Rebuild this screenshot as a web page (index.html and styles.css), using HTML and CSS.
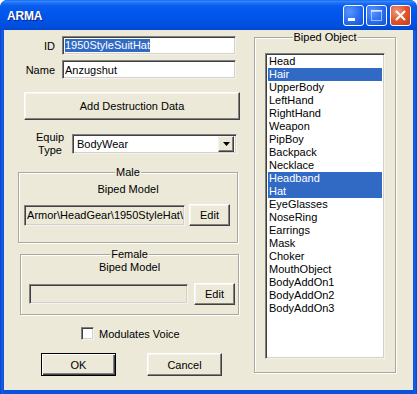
FILE: index.html
```html
<!DOCTYPE html>
<html>
<head>
<meta charset="utf-8">
<link rel="stylesheet" href="styles.css">
</head>
<body>
<div class="window">
  <div class="titlebar">
    <span class="title">ARMA</span>
    <div class="tb-buttons">
      <div class="tb-btn tb-min"><svg width="21" height="21" viewBox="0 0 21 21"><rect x="5" y="13" width="7" height="3" fill="#fff"/></svg></div>
      <div class="tb-btn tb-max"><svg width="21" height="21" viewBox="0 0 21 21"><rect x="5.5" y="5.5" width="10" height="10" fill="none" stroke="#fff" stroke-width="1" opacity="0.55"/><rect x="5" y="5" width="11" height="2" fill="#fff" opacity="0.55"/></svg></div>
      <div class="tb-btn tb-close"><svg width="21" height="21" viewBox="0 0 21 21"><path d="M6 6 L15 15 M15 6 L6 15" stroke="#fff" stroke-width="2"/></svg></div>
    </div>
  </div>
  <div class="client">
    <div class="left">
      <div class="row row-id">
        <label class="lbl">ID</label>
        <div class="edit edit-id"><span class="sel">1950StyleSuitHat</span></div>
      </div>
      <div class="row row-name">
        <label class="lbl">Name</label>
        <div class="edit edit-id">Anzugshut</div>
      </div>
      <div class="btn btn-destr">Add Destruction Data</div>
      <div class="row row-equip">
        <div class="lbl-equip">Equip<br>Type</div>
        <div class="combo">
          <span class="combo-text">BodyWear</span>
          <div class="combo-btn"><svg width="7" height="4" viewBox="0 0 7 4"><path d="M0 0 H7 L3.5 4 Z" fill="#000"/></svg></div>
        </div>
      </div>
      <div class="group group-male">
        <span class="gtitle">Male</span>
        <div class="gsub">Biped Model</div>
        <div class="grow">
          <div class="edit path path-male"><span>Armor\HeadGear\1950StyleHat\</span></div>
          <div class="btn btn-edit">Edit</div>
        </div>
      </div>
      <div class="group group-female">
        <span class="gtitle">Female</span>
        <div class="gsub">Biped Model</div>
        <div class="grow grow-f">
          <div class="edit path path-female"></div>
          <div class="btn btn-edit">Edit</div>
        </div>
      </div>
      <div class="check-row">
        <div class="checkbox"></div>
        <span>Modulates Voice</span>
      </div>
      <div class="btn-row">
        <div class="btn btn-ok">OK</div>
        <div class="btn btn-cancel">Cancel</div>
      </div>
    </div>
    <div class="right">
      <div class="group group-biped">
        <span class="gtitle">Biped Object</span>
        <div class="listbox">
          <div class="item">Head</div>
          <div class="item selected">Hair</div>
          <div class="item">UpperBody</div>
          <div class="item">LeftHand</div>
          <div class="item">RightHand</div>
          <div class="item">Weapon</div>
          <div class="item">PipBoy</div>
          <div class="item">Backpack</div>
          <div class="item">Necklace</div>
          <div class="item selected">Headband</div>
          <div class="item selected">Hat</div>
          <div class="item">EyeGlasses</div>
          <div class="item">NoseRing</div>
          <div class="item">Earrings</div>
          <div class="item">Mask</div>
          <div class="item">Choker</div>
          <div class="item">MouthObject</div>
          <div class="item">BodyAddOn1</div>
          <div class="item">BodyAddOn2</div>
          <div class="item">BodyAddOn3</div>
        </div>
      </div>
    </div>
  </div>
</div>
</body>
</html>
```

FILE: styles.css
```css
* { box-sizing: border-box; }
html, body { margin: 0; padding: 0; background: #fff; }
body { font-family: "Liberation Sans", Arial, sans-serif; font-size: 11px; color: #000; }

.window {
  width: 417px;
  height: 394px;
  display: flex;
  flex-direction: column;
  background: linear-gradient(to right, #0842C8 0px, #1660E6 2px, #0A52DC 4px, #0A52DC 413px, #1660E6 415px, #0842C8 417px);
  border-radius: 7px 7px 0 0;
  padding: 0 4px 4px 4px;
  overflow: hidden;
}

.titlebar {
  height: 30px;
  margin: 0 -4px;
  padding: 0 6px 0 7px;
  display: flex;
  align-items: center;
  justify-content: space-between;
  border-radius: 7px 7px 0 0;
  background: linear-gradient(to bottom, #0A5AE8 0px, #3B8CFF 1px, #1C70F8 3px, #0A5CEC 6px, #0058EE 12px, #0053E6 20px, #0050DE 26px, #0047CF 30px);
}
.title {
  color: #fff;
  font-weight: bold;
  font-size: 12px;
  letter-spacing: -0.2px;
  text-shadow: 1px 1px 0 #0A1E82;
  margin-top: 1px;
}
.tb-buttons { display: flex; gap: 1px; margin-top: 0px; }
.tb-btn {
  width: 21px;
  height: 21px;
  border: 1px solid #fff;
  border-radius: 3px;
  display: flex;
  align-items: center;
  justify-content: center;
  margin-left: 1px;
}
.tb-btn svg { display: block; margin: -1px; }
.tb-min, .tb-max {
  background: radial-gradient(circle at 30% 30%, #5A96FF 0%, #2C6FF2 50%, #1150D8 100%);
}
.tb-max { opacity: 1; }
.tb-close {
  margin-left: 2px;
  background: radial-gradient(circle at 30% 30%, #F09A80 0%, #E1542C 50%, #C4391B 100%);
}

.client {
  flex: 1;
  background: #ECE9D8;
  display: flex;
}

.left { width: 240px; display: flex; flex-direction: column; }
.right { flex: 1; }

.row { display: flex; align-items: center; }
.row-id { margin-top: 6px; height: 19px; }
.row-name { margin-top: 5px; height: 19px; }
.lbl { width: 51px; text-align: right; margin-right: 7px; }

.edit {
  background: #fff;
  border: 1px solid;
  border-color: #808080 #F4F3EE #F4F3EE #808080;
  box-shadow: inset 1px 1px 0 #404040, inset -1px -1px 0 #D4D0C8;
  padding: 0 2px;
  white-space: nowrap;
  overflow: hidden;
  display: flex;
  align-items: center;
}
.edit-id { width: 174px; height: 19px; }
.sel { background: #316AC5; color: #fff; line-height: 13px; }

.btn {
  background: #ECE9D8;
  border: 1px solid;
  border-color: #FFFFFF #404040 #404040 #FFFFFF;
  box-shadow: inset -1px -1px 0 #808080, inset 1px 1px 0 #F6F5EF;
  display: flex;
  align-items: center;
  justify-content: center;
}
.btn-destr { margin: 13px 0 0 20px; width: 216px; height: 28px; }

.row-equip { margin-top: 14px; height: 20px; }
.lbl-equip { width: 30px; margin-left: 31px; margin-right: 7px; text-align: center; line-height: 13px; }
.combo {
  width: 165px;
  height: 20px;
  background: #fff;
  border: 1px solid;
  border-color: #808080 #F4F3EE #F4F3EE #808080;
  box-shadow: inset 1px 1px 0 #404040, inset -1px -1px 0 #D4D0C8;
  display: flex;
  align-items: center;
  justify-content: space-between;
  padding: 0 2px 0 4px;
}
.combo-btn {
  width: 16px;
  height: 16px;
  background: #ECE9D8;
  border: 1px solid;
  border-color: #F4F3EE #404040 #404040 #F4F3EE;
  box-shadow: inset -1px -1px 0 #808080;
  display: flex;
  align-items: center;
  justify-content: center;
}
.combo-btn svg { display: block; }

.group {
  position: relative;
  border: 1px solid #ACA899;
  box-shadow: inset 1px 1px 0 #fff, 1px 1px 0 #fff;
}
.gtitle {
  position: absolute;
  top: -7px;
  left: 50%;
  transform: translateX(-50%);
  background: #ECE9D8;
  padding: 0 1px;
  line-height: 13px;
  white-space: nowrap;
}
.gsub { text-align: center; line-height: 13px; }
.grow { display: flex; align-items: center; }

.group-male { margin: 18px 0 0 14px; width: 220px; height: 71px; padding-top: 10px; }
.group-male .grow { margin: 8px 0 0 5px; }
.path { background: #ECE9D8; height: 21px; padding: 0 1px; }
.path-male { width: 161px; justify-content: flex-end; }
.group-male .btn-edit { margin-left: 4px; width: 41px; height: 22px; }

.group-female { margin: 11px 0 0 16px; width: 219px; height: 61px; padding-top: 6px; }
.group-female .grow { margin: 9px 0 0 8px; }
.path-female { width: 159px; height: 20px; }
.group-female .btn-edit { margin-left: 6px; width: 41px; height: 22px; }

.check-row { display: flex; align-items: center; margin: 12px 0 0 77px; height: 13px; }
.checkbox {
  width: 13px;
  height: 13px;
  background: #fff;
  border: 1px solid;
  border-color: #808080 #F4F3EE #F4F3EE #808080;
  box-shadow: inset 1px 1px 0 #404040, inset -1px -1px 0 #D4D0C8;
  margin-right: 5px;
}

.btn-row { display: flex; margin: 13px 0 0 37px; }
.btn-ok { width: 75px; height: 23px; border-color: #000; box-shadow: inset 1px 1px 0 #fff, inset -1px -1px 0 #404040, inset -2px -2px 0 #808080; }
.btn-cancel { width: 75px; height: 23px; margin-left: 31px; }

.group-biped { margin: 7px 0 0 10px; width: 142px; height: 336px; padding: 15px 0 0 10px; }
.listbox {
  width: 120px;
  height: 306px;
  background: #fff;
  border: 1px solid;
  border-color: #808080 #F4F3EE #F4F3EE #808080;
  box-shadow: inset 1px 1px 0 #404040, inset -1px -1px 0 #D4D0C8;
  padding: 1px 2px;
  overflow: hidden;
}
.item { height: 13px; line-height: 13px; padding-left: 1px; white-space: nowrap; }
.item.selected { background: #316AC5; color: #fff; }
```
